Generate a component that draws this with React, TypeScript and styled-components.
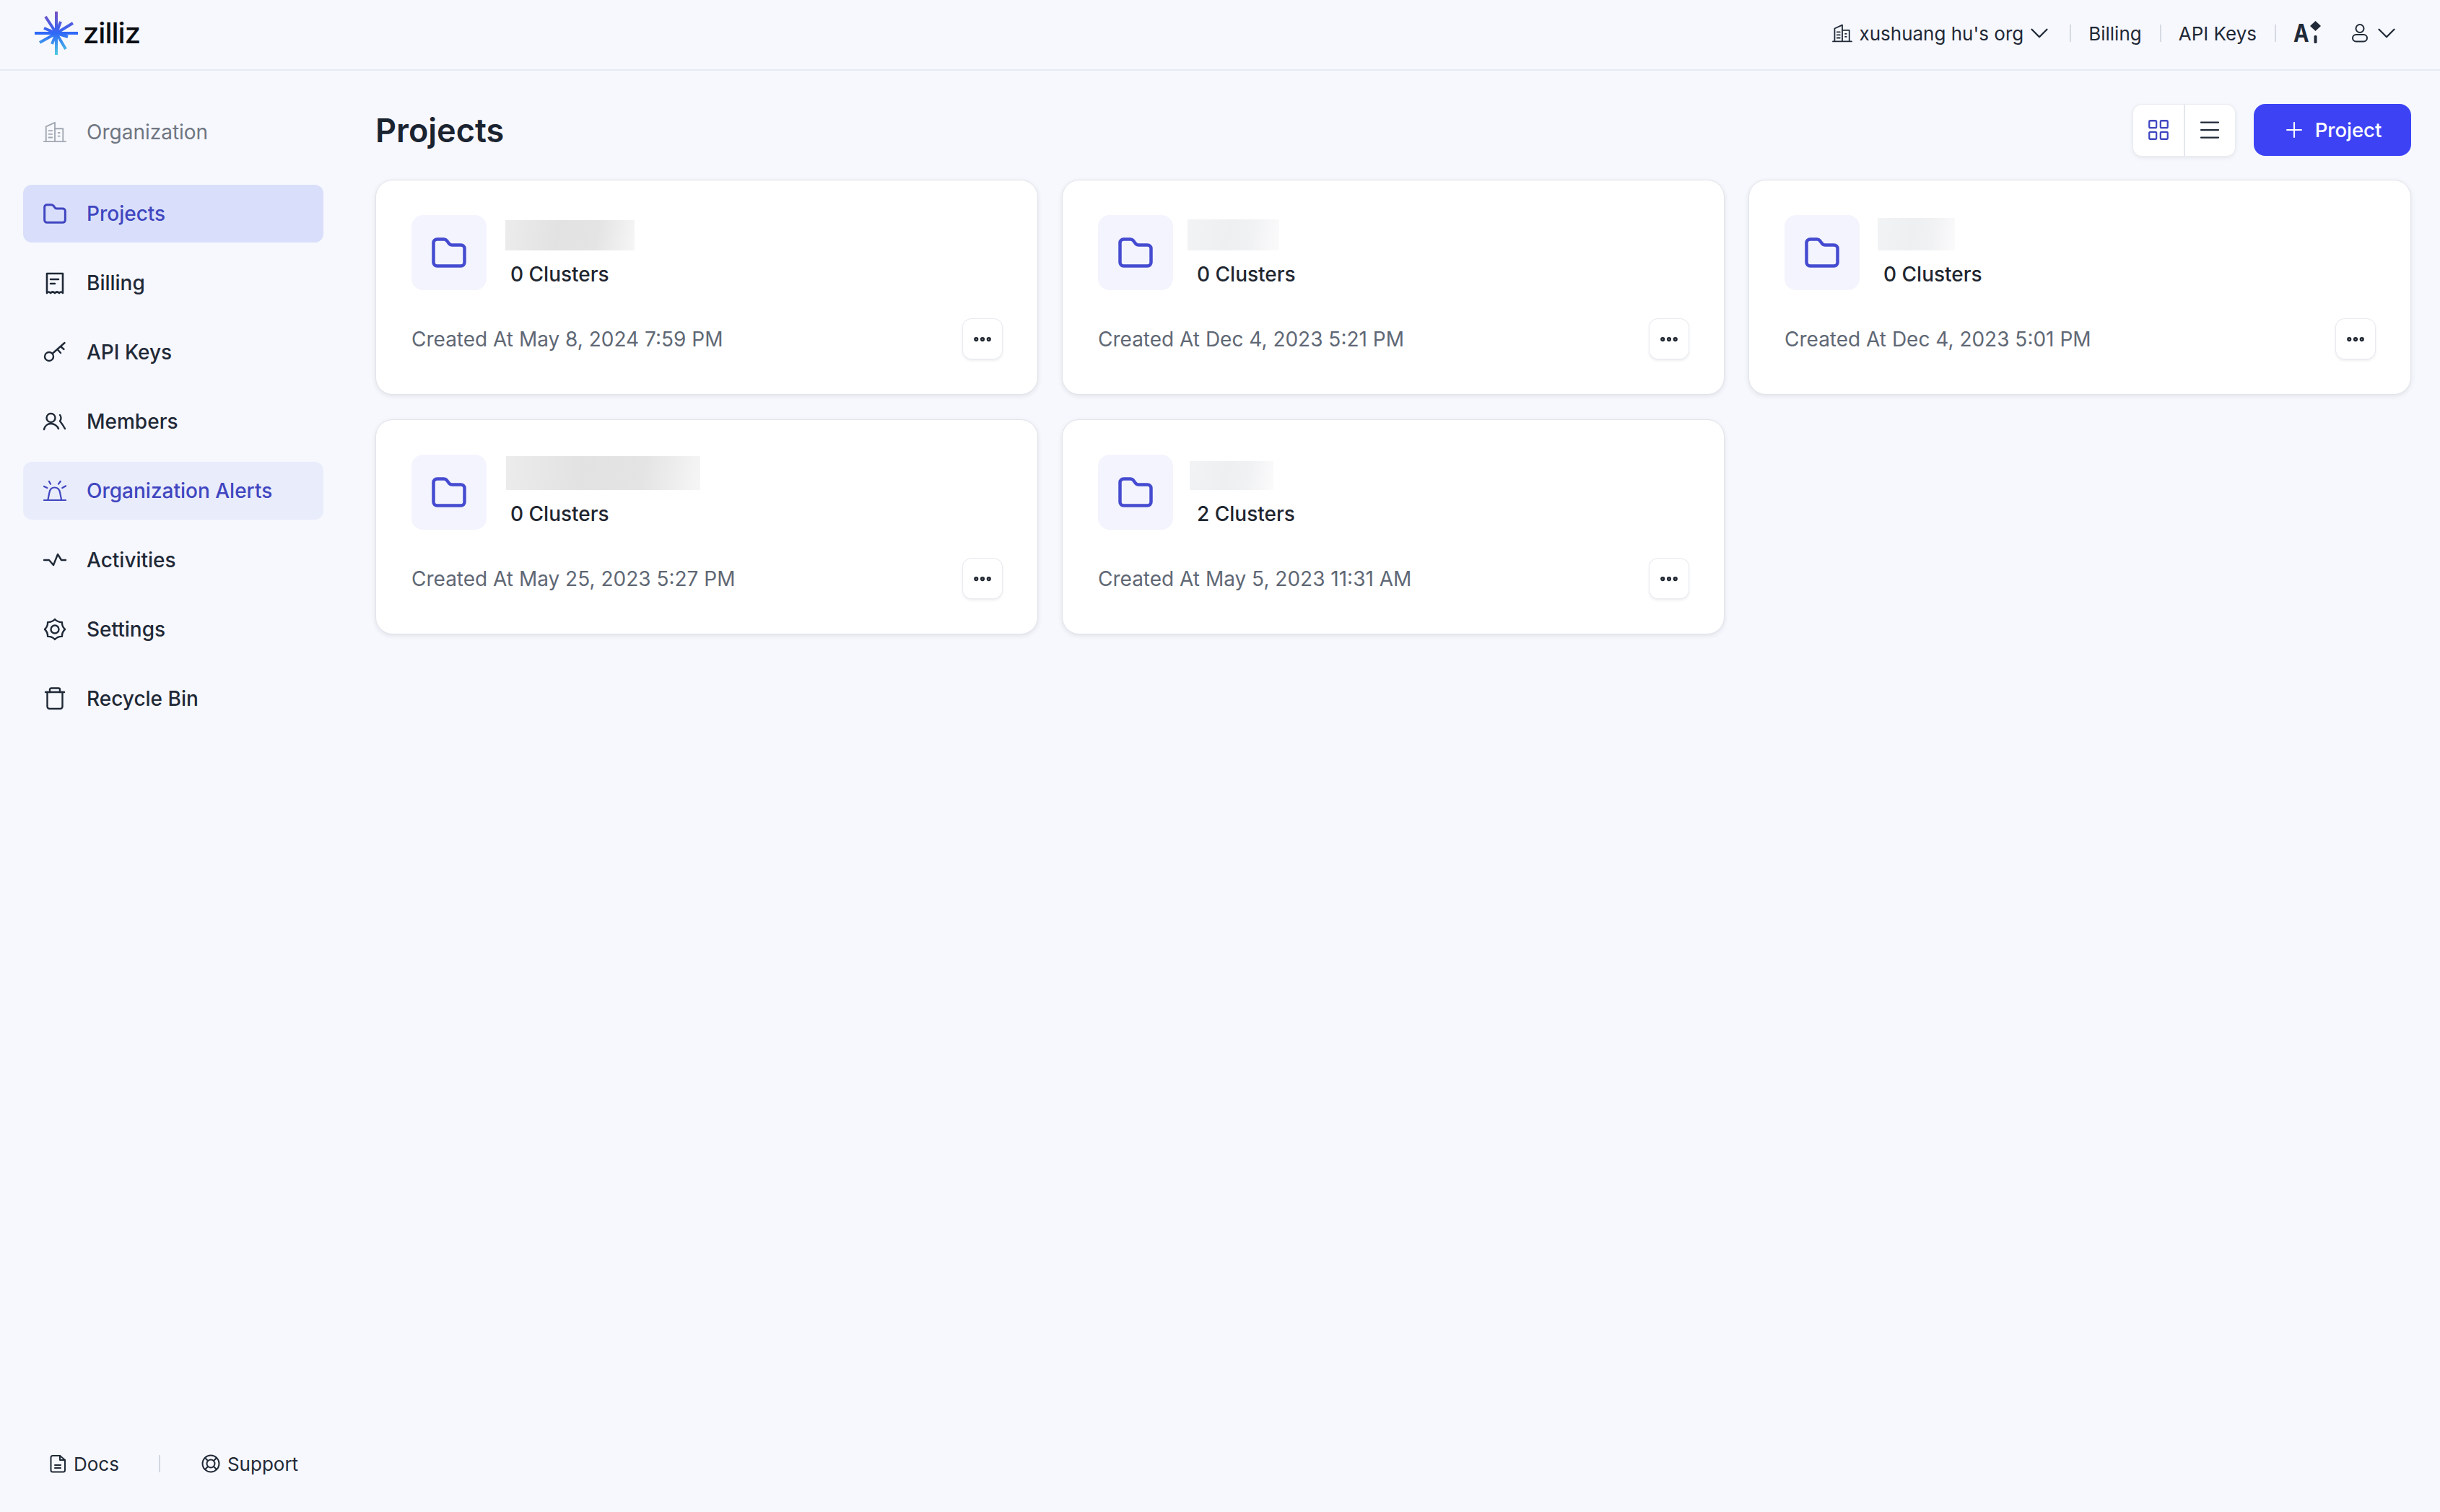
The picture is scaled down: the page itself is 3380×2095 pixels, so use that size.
import React from 'react';
import styled, { createGlobalStyle } from 'styled-components';
import { Plus, ChevronDown, Ellipsis, Menu, LayoutGrid } from 'lucide-react';

const GlobalStyle = createGlobalStyle`
  html, body {
    margin: 0;
    padding: 0;
    background: #f7f8fd;
    font-family: Inter, "Liberation Sans", sans-serif;
    color: #1f2937;
  }
  * { box-sizing: border-box; }
`;

const Page = styled.div`
  display: flex;
  flex-direction: column;
  min-height: 100vh;
  background: #f7f8fd;
`;

const TopBar = styled.header`
  display: flex;
  align-items: center;
  justify-content: space-between;
  height: 98px;
  padding: 0 40px 4px 46px;
  border-bottom: 2px solid #e7eaf0;
`;

const Logo = styled.div`
  display: flex;
  align-items: center;
  gap: 5px;
`;

const LogoWord = styled.span`
  font-size: 40px;
  font-weight: 500;
  letter-spacing: -1px;
  color: #0b0d12;
  line-height: 40px;
`;

const TopNav = styled.nav`
  display: flex;
  align-items: center;
  font-size: 26px;
  color: #1f2937;
`;

const TopItem = styled.div`
  display: flex;
  align-items: center;
  gap: 9px;
  white-space: nowrap;
`;

const TopDivider = styled.span`
  flex: none;
  width: 2px;
  height: 24px;
  margin: 0 24px 0 25px;
  background: #d6dae3;
`;

const Caret = styled(ChevronDown)<{ $pull?: number }>`
  flex: none;
  margin: 0 -4px 0 ${(p) => p.$pull ?? -5}px;
`;

const AiMark = styled.div`
  flex: none;
  display: flex;
  width: 40px;
  height: 34px;
`;

const AiLetter = styled.span`
  display: block;
  width: 21px;
  font-size: 34px;
  font-weight: 700;
  line-height: 34px;
  transform: scaleX(0.85);
  transform-origin: left center;
`;

const UserSlot = styled.div`
  display: flex;
  align-items: center;
  gap: 9px;
  margin-left: 40px;
  margin-right: 17px;
`;

const Layout = styled.div`
  flex: 1;
  display: flex;
`;

const Sidebar = styled.aside`
  flex: none;
  width: 480px;
  display: flex;
  flex-direction: column;
  padding: 45px 32px 47px;
`;

const NavList = styled.nav`
  display: flex;
  flex-direction: column;
  gap: 16px;
  width: 416px;
`;

const NavItem = styled.a<{ $tone?: 'muted' | 'selected' | 'soft' }>`
  display: flex;
  align-items: center;
  gap: 28px;
  height: 80px;
  padding-left: 28px;
  border-radius: 12px;
  font-size: 28px;
  font-weight: ${(p) => (p.$tone === 'muted' ? 400 : 500)};
  margin-bottom: ${(p) => (p.$tone === 'muted' ? '17px' : '0')};
  color: ${(p) => (p.$tone === 'muted' ? '#6f7682' : p.$tone ? '#4046c0' : '#1f2937')};
  background: ${(p) => (p.$tone === 'selected' ? '#d9dffa' : p.$tone === 'soft' ? '#e9ecfb' : 'transparent')};
`;

const SideFooter = styled.div`
  margin-top: auto;
  display: flex;
  align-items: center;
  height: 40px;
  padding-left: 36px;
  font-size: 26px;
  color: #1f2937;
`;

const FooterLink = styled.a`
  display: flex;
  align-items: center;
  gap: 10px;
`;

const FooterDivider = styled.span`
  width: 2px;
  height: 24px;
  margin: 0 57px 0 55px;
  background: #d3d8e4;
`;

const Main = styled.main`
  flex: 1;
  min-width: 0;
  padding: 46px 40px 0;
`;

const TitleRow = styled.div`
  display: flex;
  align-items: center;
  justify-content: space-between;
  height: 72px;
  margin-bottom: 33px;
`;

const Title = styled.h1`
  margin: 0;
  font-size: 45px;
  font-weight: 600;
  color: #1a2330;
`;

const Actions = styled.div`
  display: flex;
  align-items: center;
  gap: 26px;
`;

const ViewToggle = styled.div`
  display: flex;
  height: 71px;
  width: 141px;
  background: #fff;
  border-radius: 12px;
  box-shadow: 0 0 0 1px #e8ebf0, 0 2px 6px rgba(31, 41, 55, 0.1);
`;

const ToggleCell = styled.button<{ $on?: boolean }>`
  flex: 1;
  display: flex;
  align-items: center;
  justify-content: center;
  padding: 0;
  border: 0;
  background: transparent;
  color: ${(p) => (p.$on ? '#4046c0' : '#1f2937')};
  & + & {
    border-left: 2px solid #e4e7ec;
  }
`;

const PrimaryButton = styled.button`
  display: flex;
  align-items: center;
  justify-content: center;
  gap: 12px;
  width: 218px;
  height: 72px;
  padding: 0 2px 0 0;
  border: 0;
  border-radius: 16px;
  background: #3d43f5;
  color: #fff;
  font-family: inherit;
  font-size: 27.5px;
  font-weight: 500;
`;

const CardGrid = styled.div`
  display: grid;
  grid-template-columns: repeat(3, 1fr);
  column-gap: 33px;
  row-gap: 34px;
`;

const Card = styled.article`
  height: 298px;
  padding: 48px 49px;
  background: #fff;
  border: 1px solid #e1e4ea;
  border-radius: 24px;
  box-shadow: 0 2px 6px rgba(31, 41, 55, 0.1);
`;

const CardHead = styled.div`
  display: flex;
  gap: 26px;
  height: 104px;
`;

const IconTile = styled.div`
  flex: none;
  display: flex;
  align-items: center;
  justify-content: center;
  width: 104px;
  height: 104px;
  border-radius: 16px;
  background: #f3f4fd;
  color: #454bd0;
`;

const CardText = styled.div`
  display: flex;
  flex-direction: column;
  justify-content: flex-end;
  padding-bottom: 4px;
`;

const Redacted = styled.div<{ $w: number; $h: number; $x: number; $dark?: boolean }>`
  width: ${(p) => p.$w}px;
  height: ${(p) => p.$h}px;
  margin-left: ${(p) => p.$x}px;
  background: ${(p) =>
    p.$dark
      ? 'linear-gradient(100deg, #ececec 0%, #e2e2e2 40%, #e4e4e4 70%, #f6f6f6 100%)'
      : 'linear-gradient(100deg, #f2f3f4 0%, #eeeff1 45%, #f1f2f3 70%, #fbfbfc 100%)'};
`;

const ClusterCount = styled.div`
  margin: 15px 0 0 7px;
  font-size: 28px;
  font-weight: 500;
  line-height: 36px;
  color: #1f2630;
`;

const CardFoot = styled.div`
  display: flex;
  align-items: center;
  justify-content: space-between;
  margin-top: 40px;
`;

const CreatedAt = styled.span`
  font-size: 28px;
  color: #5f6875;
`;

const MoreButton = styled.button`
  display: flex;
  align-items: center;
  justify-content: center;
  width: 54px;
  height: 55px;
  padding: 0;
  background: #fff;
  border: 0;
  border-radius: 12px;
  box-shadow: 0 0 0 1px #e8ebf0, 0 2px 4px rgba(31, 41, 55, 0.12);
  color: #1f2630;
`;

const Ico: React.FC<{ width?: number; height?: number; view?: string; stroke?: string; weight?: number; children: React.ReactNode }> = ({
  width = 32,
  height = 32,
  view,
  stroke = 'currentColor',
  weight = 2.2,
  children,
}) => (
  <svg
    width={width}
    height={height}
    viewBox={view || `0 0 ${width} ${height}`}
    fill="none"
    stroke={stroke}
    strokeWidth={weight}
    strokeLinecap="round"
    strokeLinejoin="round"
    style={{ flex: 'none' }}
  >
    {children}
  </svg>
);

const StarLogo = () => (
  <svg width="64" height="64" viewBox="0 0 64 64" style={{ flex: 'none' }}>
    <defs>
      <linearGradient id="burst" gradientUnits="userSpaceOnUse" x1="32" y1="2" x2="32" y2="62">
        <stop offset="0" stopColor="#7a4fc0" />
        <stop offset="0.5" stopColor="#2f68f8" />
        <stop offset="1" stopColor="#4ecbe0" />
      </linearGradient>
    </defs>
    <g stroke="url(#burst)" strokeWidth="4" strokeLinecap="butt">
      <path d="M32 2V62" />
      <path d="M2 32H62" />
      <path d="M17 9L32 32L45 54" />
      <path d="M55 18L32 32L9 45" />
      <path d="M38 16L32 32L26 47" />
      <path d="M15 25L32 32L48 37" />
    </g>
  </svg>
);

const BuildingPaths = () => (
  <>
    <path d="M1 30H33" />
    <path d="M4 29V8L17 2V29" />
    <path d="M17 11H29V29" />
    <path d="M8 14H13M8 19H13M8 24H13M22 17H24M22 22H24" />
  </>
);

const FolderIcon: React.FC<{ width: number; height: number }> = ({ width, height }) => (
  <Ico width={width} height={height} view="0 0 48 42" weight={4.5}>
    <path d="M2.5 7.5a5 5 0 0 1 5-5H17c2 0 3 .8 4 2l3 4c1 1.2 2 2 4 2H40.5a5 5 0 0 1 5 5V34.5a5 5 0 0 1-5 5H7.5a5 5 0 0 1-5-5Z" />
  </Ico>
);

const ReceiptIcon = () => (
  <Ico weight={2.6}>
    <path d="M5 3H27V30C25 28 24 28 22 30C20 28 18 28 16 30C14 28 12 28 10 30C8 28 7 28 5 30Z" />
    <path d="M10 11H21M10 17H16" />
  </Ico>
);

const KeyIcon = () => (
  <Ico weight={2.4}>
    <circle cx="8" cy="22" r="6" />
    <path d="M12.5 18L29.5 3M24 8L28.5 12M19.5 12L24 17" />
  </Ico>
);

const MembersIcon = () => (
  <Ico weight={2.4}>
    <circle cx="10.5" cy="11" r="6" />
    <path d="M1 27C2 22 6 19 10.5 19C15 19 19.5 22 21 26" />
    <path d="M23 7C25 9 25 13 23 15.5C25 18 28 22 30 26" />
  </Ico>
);

const AlertIcon = () => (
  <Ico weight={2.2}>
    <path d="M1 29H31" />
    <path d="M6.5 28L8.5 18C9.5 13 13 11.5 15.5 11.5C18.5 11.5 22 13 23 18L25 28" />
    <path d="M8 3L10 6.7M23.7 3L21 6.7M1 10L5.3 12M31.3 9.3L26.3 12" />
  </Ico>
);

const ActivityIcon = () => (
  <Ico weight={2.4}>
    <path d="M1 16H8L14 23L20 8L25 16H31.5" />
  </Ico>
);

// wavy outline for the gear, eight soft lobes
const gearPath = Array.from({ length: 8 })
  .map((_, i) => {
    const a = (i * Math.PI) / 4;
    const mid = a + Math.PI / 8;
    const next = a + Math.PI / 4;
    const pt = (ang: number, r: number) => `${(16 + r * Math.cos(ang)).toFixed(2)} ${(16 + r * Math.sin(ang)).toFixed(2)}`;
    return `${i === 0 ? `M${pt(a, 14)}` : ''}Q${pt(mid, 10.5)} ${pt(next, 14)}`;
  })
  .join('');

const SettingsIcon = () => (
  <Ico weight={2.4}>
    <path d={gearPath} />
    <circle cx="16" cy="16" r="5.5" />
  </Ico>
);

const BinIcon = () => (
  <Ico weight={2.4}>
    <path d="M3 7H29" />
    <path d="M9 7V3.5a2 2 0 0 1 2-2H21a2 2 0 0 1 2 2V7" />
    <path d="M5.5 7V27a3 3 0 0 0 3 3H23.5a3 3 0 0 0 3-3V7" />
  </Ico>
);

const DocIcon = () => (
  <Ico width={24} height={26} weight={2}>
    <path d="M5 2H15L22 8V22C22 23.5 21 24.5 19.5 24.5H5C3.5 24.5 2.5 23.5 2.5 22V4.5C2.5 3 3.5 2 5 2Z" />
    <path d="M15 2V8H22M8 15H16M8 19H16" />
  </Ico>
);

const SupportIcon = () => (
  <Ico width={26} height={26} weight={2}>
    <circle cx="13" cy="13" r="11.5" />
    <circle cx="13" cy="13" r="5.5" />
    <path d="M5 5L9 9M21 5L17 9M5 21L9 17M21 21L17 17" />
  </Ico>
);

const UserIcon = () => (
  <Ico width={24} height={26} weight={2}>
    <circle cx="12" cy="6.5" r="5.5" />
    <rect x="2" y="15" width="20" height="9.5" rx="4.7" />
  </Ico>
);

const SparkMark = () => (
  <svg width="19" height="34" viewBox="0 0 19 34" fill="#1f2937" style={{ flex: 'none' }}>
    <path d="M9.5 0L17 7L9.5 14L2 7Z" />
    <rect x="7.5" y="20" width="4" height="11" rx="1.5" />
  </svg>
);

const navItems = [
  { label: 'Billing', icon: <ReceiptIcon /> },
  { label: 'API Keys', icon: <KeyIcon /> },
  { label: 'Members', icon: <MembersIcon /> },
  { label: 'Organization Alerts', icon: <AlertIcon />, tone: 'soft' as const },
  { label: 'Activities', icon: <ActivityIcon /> },
  { label: 'Settings', icon: <SettingsIcon /> },
  { label: 'Recycle Bin', icon: <BinIcon /> },
];

const projects = [
  { count: '0 Clusters', created: 'May 8, 2024 7:59 PM', w: 179, h: 42, x: 0, dark: true },
  { count: '0 Clusters', created: 'Dec 4, 2023 5:21 PM', w: 127, h: 43, x: -6 },
  { count: '0 Clusters', created: 'Dec 4, 2023 5:01 PM', w: 107, h: 45, x: -1 },
  { count: '0 Clusters', created: 'May 25, 2023 5:27 PM', w: 269, h: 47, x: 1, dark: true },
  { count: '2 Clusters', created: 'May 5, 2023 11:31 AM', w: 116, h: 40, x: -3 },
];

export default function App() {
  return (
    <Page>
      <GlobalStyle />
      <TopBar>
        <Logo>
          <StarLogo />
          <LogoWord>zilliz</LogoWord>
        </Logo>
        <TopNav>
          <TopItem>
            <Ico width={28} height={26} view="0 0 34 32" weight={2.2}>
              <BuildingPaths />
            </Ico>
            xushuang hu's org
            <Caret $pull={-8} size={42} strokeWidth={1.3} />
          </TopItem>
          <TopDivider />
          <TopItem>Billing</TopItem>
          <TopDivider />
          <TopItem>API Keys</TopItem>
          <TopDivider />
          <AiMark>
            <AiLetter>A</AiLetter>
            <SparkMark />
          </AiMark>
          <UserSlot>
            <UserIcon />
            <Caret size={42} strokeWidth={1.3} />
          </UserSlot>
        </TopNav>
      </TopBar>
      <Layout>
        <Sidebar>
          <NavList>
            <NavItem $tone="muted">
              <Ico view="0 0 34 32" stroke="#a2a8b3" weight={2}>
                <BuildingPaths />
              </Ico>
              Organization
            </NavItem>
            <NavItem $tone="selected">
              <FolderIcon width={32} height={28} />
              Projects
            </NavItem>
            {navItems.map((item) => (
              <NavItem key={item.label} $tone={item.tone}>
                {item.icon}
                {item.label}
              </NavItem>
            ))}
          </NavList>
          <SideFooter>
            <FooterLink>
              <DocIcon />
              Docs
            </FooterLink>
            <FooterDivider />
            <FooterLink>
              <SupportIcon />
              Support
            </FooterLink>
          </SideFooter>
        </Sidebar>
        <Main>
          <TitleRow>
            <Title>Projects</Title>
            <Actions>
              <ViewToggle>
                <ToggleCell $on>
                  <LayoutGrid size={34} strokeWidth={1.6} />
                </ToggleCell>
                <ToggleCell>
                  <Menu size={36} strokeWidth={1.5} />
                </ToggleCell>
              </ViewToggle>
              <PrimaryButton>
                <Plus size={34} strokeWidth={1.5} />
                Project
              </PrimaryButton>
            </Actions>
          </TitleRow>
          <CardGrid>
            {projects.map((project) => (
              <Card key={project.created}>
                <CardHead>
                  <IconTile>
                    <FolderIcon width={48} height={42} />
                  </IconTile>
                  <CardText>
                    <Redacted $w={project.w} $h={project.h} $x={project.x} $dark={project.dark} />
                    <ClusterCount>{project.count}</ClusterCount>
                  </CardText>
                </CardHead>
                <CardFoot>
                  <CreatedAt>Created At {project.created}</CreatedAt>
                  <MoreButton>
                    <Ellipsis size={30} strokeWidth={3} />
                  </MoreButton>
                </CardFoot>
              </Card>
            ))}
          </CardGrid>
        </Main>
      </Layout>
    </Page>
  );
}
